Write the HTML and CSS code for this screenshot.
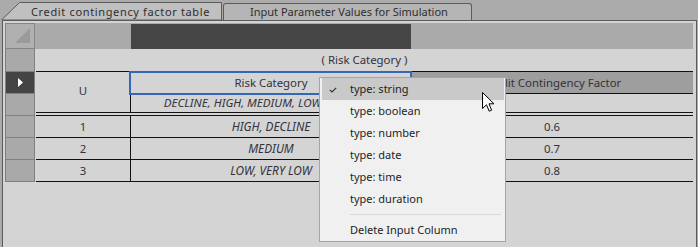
FILE: index.html
```html
<!DOCTYPE html>
<html lang="en">
<head>
    <meta charset="UTF-8">
    <title>Credit contingency factor table</title>
    <link rel="stylesheet" href="styles.css">
</head>
<body>
    <div class="tabbar">
        <div class="tab tab-active">
            <svg class="tab-shape" width="221" height="18" viewBox="0 0 221 18">
                <polygon points="0.5,18 18.5,0.5 220.5,0.5 220.5,18" fill="#c0c0c0" stroke="#5c5c5c" stroke-width="1"/>
            </svg>
            <span class="tab-label">Credit contingency factor table</span>
        </div>
        <div class="tab tab-plain">Input Parameter Values for Simulation</div>
    </div>

    <div class="panel">
        <div class="band">
            <div class="corner">
                <svg width="15" height="15" viewBox="0 0 15 15"><polygon points="15,0 15,15 0,15" fill="#9a9a9a"/></svg>
            </div>
            <div class="band-fill">
                <div class="band-dark"></div>
            </div>
        </div>

        <div class="sheet">
            <div class="rowheads">
                <div class="rh rh-first"></div>
                <div class="rh rh-current">
                    <svg width="5" height="9" viewBox="0 0 5 9"><polygon points="0,0 5,4.5 0,9" fill="#ffffff"/></svg>
                </div>
                <div class="rh"></div>
                <div class="rh"></div>
                <div class="rh"></div>
                <div class="rh"></div>
            </div>

            <div class="grid">
                <div class="c title">( Risk Category )</div>

                <div class="c u">U</div>
                <div class="c risk rhead">Risk Category</div>
                <div class="c chead">Credit Contingency Factor</div>
                <div class="c risk dvals">DECLINE, HIGH, MEDIUM, LOW, VERY LOW</div>
                <div class="c dvals"></div>

                <div class="c gap"></div>

                <div class="c">1</div>
                <div class="c risk it">HIGH, DECLINE</div>
                <div class="c">0.6</div>

                <div class="c">2</div>
                <div class="c risk it">MEDIUM</div>
                <div class="c">0.7</div>

                <div class="c">3</div>
                <div class="c risk it">LOW, VERY LOW</div>
                <div class="c">0.8</div>
            </div>
        </div>
    </div>

    <div class="menu">
        <div class="mi mi-on">
            <svg class="check" width="8" height="6" viewBox="0 0 8 6"><polyline points="0.8,2.8 3,5 7.2,0.8" fill="none" stroke="#333" stroke-width="1.2"/></svg>
            type: string
        </div>
        <div class="mi">type: boolean</div>
        <div class="mi">type: number</div>
        <div class="mi">type: date</div>
        <div class="mi">type: time</div>
        <div class="mi">type: duration</div>
        <div class="msep"></div>
        <div class="mi">Delete Input Column</div>
    </div>

    <svg class="cursor" width="13" height="21" viewBox="0 0 13 21">
        <path d="M0.5,0.5 L0.5,16.5 L4.5,12.8 L7.2,19.2 L9.6,18.2 L7,11.8 L12,11.8 Z" fill="#ffffff" stroke="#000000" stroke-width="1" stroke-linejoin="miter"/>
    </svg>
</body>
</html>
```

FILE: styles.css
```css
body {
    margin: 0;
    width: 698px;
    height: 247px;
    overflow: hidden;
    position: relative;
    background-color: #ababab;
    font-family: "Noto Sans", "DejaVu Sans", sans-serif;
    font-size: 11px;
    color: #333333;
}
.tabbar {
    display: flex;
    align-items: flex-end;
    height: 20px;
    padding-left: 1px;
}
.tab {
    position: relative;
    box-sizing: border-box;
    white-space: nowrap;
}
.tab-active {
    width: 221px;
    height: 18px;
    padding-left: 30px;
    line-height: 19px;
    letter-spacing: 0.65px;
    color: #2e2e2e;
}
.tab-shape {
    position: absolute;
    left: 0;
    top: 0;
}
.tab-label {
    position: relative;
}
.tab-plain {
    width: 249px;
    height: 17px;
    margin-left: 1px;
    padding-left: 26px;
    line-height: 16px;
    border: 1px solid #5c5c5c;
    border-bottom: none;
    border-radius: 3px 3px 0 0;
    background-color: #b5b5b5;
    color: #2e2e2e;
}
.panel {
    margin-left: 2px;
    width: 695px;
    height: 227px;
    box-sizing: border-box;
    border: 1px solid #5c5c5c;
    border-bottom: none;
    padding: 2px 3px 0 2px;
    background-color: #d4d4d4;
}
.band {
    display: flex;
    height: 26px;
}
.corner {
    width: 30px;
    box-sizing: border-box;
    border: 1px solid #858585;
    background-color: #b0b0b0;
}
.corner svg {
    display: block;
    margin: 4px 0 0 9px;
}
.band-fill {
    flex: 1;
    padding: 1px 0 0 96px;
    background-color: #aaaaaa;
}
.band-dark {
    width: 280px;
    height: 25px;
    background-color: #454545;
}
.sheet {
    display: flex;
    align-items: flex-start;
}
.rowheads {
    width: 30px;
}
.rh {
    height: 21px;
    border: 1px solid #808080;
    border-top: none;
    background-color: #a9a9a9;
}
.rh-first {
    height: 22px;
}
.rh-current {
    display: flex;
    align-items: center;
    justify-content: center;
    background-color: #444444;
}
.grid {
    margin-left: 1px;
    width: 657px;
    display: grid;
    grid-template-columns: 94px 281px 1fr;
    font-size: 11.4px;
    color: #32323a;
}
.c {
    height: 21px;
    line-height: 21px;
    border-bottom: 1px solid #111111;
    text-align: center;
    white-space: nowrap;
    overflow: hidden;
}
.title {
    grid-column: 1 / -1;
    height: 22px;
    line-height: 22px;
}
.u {
    grid-row: span 2;
    height: 40px;
    line-height: 38px;
}
.risk {
    border-left: 1px solid #111111;
}
.rhead {
    overflow: visible;
    outline: 2px solid #3566b8;
    outline-offset: -1px;
    position: relative;
}
.chead {
    background-color: #9e9e9e;
    overflow: visible;
}
.dvals {
    height: 18px;
    line-height: 18px;
    font-style: italic;
    font-size: 11.6px;
}
.it {
    font-style: italic;
    font-size: 11.8px;
}
.gap {
    grid-column: 1 / -1;
    height: 2px;
}
.menu {
    position: absolute;
    left: 319px;
    top: 77px;
    width: 187px;
    height: 165px;
    box-sizing: border-box;
    padding: 0 1px 0 2px;
    border: 1px solid #a5a5a5;
    background-color: #f0f0f0;
    color: #1e1e1e;
}
.mi {
    position: relative;
    height: 22px;
    line-height: 22px;
    padding-left: 28px;
    white-space: nowrap;
}
.mi-on {
    background-color: #c9c9c9;
}
.check {
    position: absolute;
    left: 7px;
    top: 9px;
}
.msep {
    height: 1px;
    margin: 4px 3px 4px 28px;
    background-color: #d9d9d9;
}
.cursor {
    position: absolute;
    left: 482px;
    top: 92px;
}
```
